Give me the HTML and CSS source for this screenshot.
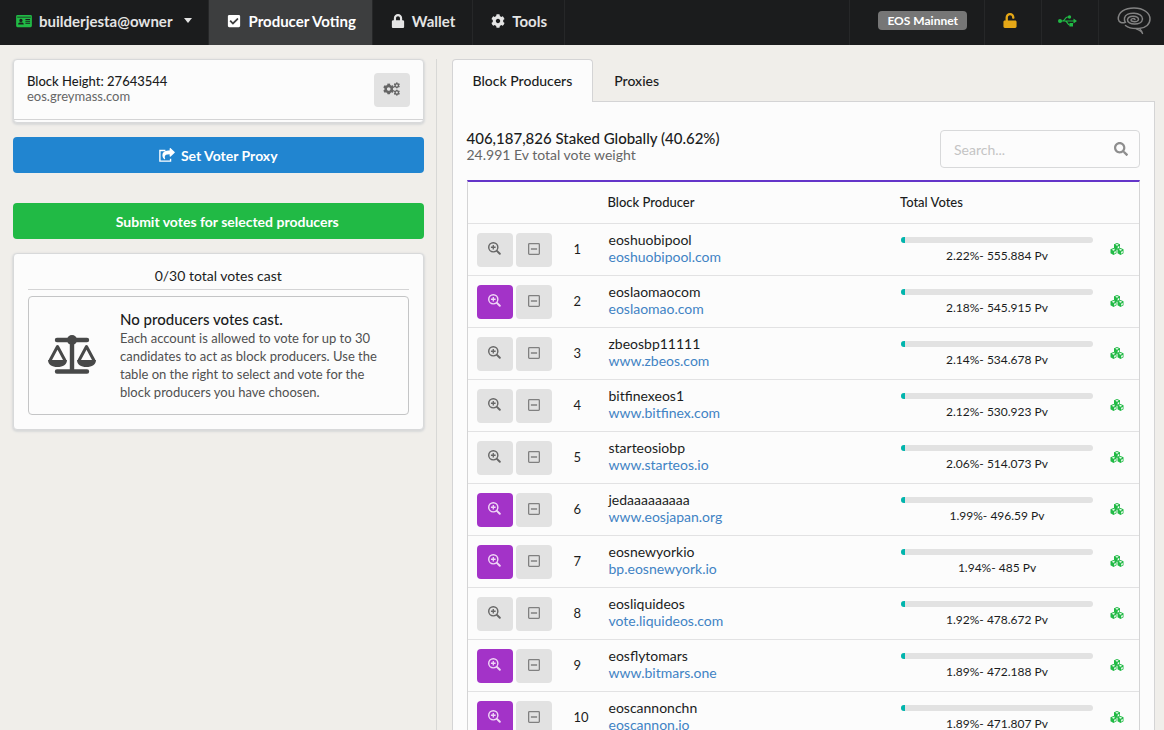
FILE: index.html
```html
<!DOCTYPE html>
<html lang="en">
<head>
    <meta charset="UTF-8">
    <meta name="viewport" content="width=device-width, initial-scale=1.0">
    <title>Producer Voting</title>
    <link rel="stylesheet" href="styles.css">
</head>
<body>
    <svg class="sprite" aria-hidden="true">
        <symbol id="id-card" viewBox="0 0 576 512">
            <path fill-rule="evenodd" d="M48 32h480a48 48 0 0 1 48 48v352a48 48 0 0 1-48 48H48a48 48 0 0 1-48-48V80a48 48 0 0 1 48-48zM40 100v24h496v-24zM176 176a60 60 0 1 0 0 120 60 60 0 0 0 0-120zM72 384h208c0-50-30-76-60-76h-88c-30 0-60 26-60 76zM340 180v40h170v-40zM340 250v36h170v-36zM340 320v36h170v-36z"/>
        </symbol>
        <symbol id="check-square" viewBox="0 0 448 512">
            <path d="M400 480H48c-26.51 0-48-21.49-48-48V80c0-26.51 21.49-48 48-48h352c26.51 0 48 21.49 48 48v352c0 26.51-21.49 48-48 48zm-204.686-98.059l184-184c6.248-6.248 6.248-16.379 0-22.627l-22.627-22.627c-6.248-6.248-16.379-6.249-22.628 0L184 302.745l-70.059-70.059c-6.248-6.248-16.379-6.248-22.628 0l-22.627 22.627c-6.248 6.248-6.248 16.379 0 22.627l104 104c6.249 6.25 16.379 6.25 22.628.001z"/>
        </symbol>
        <symbol id="lock" viewBox="0 0 448 512">
            <path d="M400 224h-24v-72C376 68.2 307.8 0 224 0S72 68.2 72 152v72H48c-26.5 0-48 21.5-48 48v192c0 26.5 21.5 48 48 48h352c26.5 0 48-21.5 48-48V272c0-26.5-21.5-48-48-48zm-104 0H152v-72c0-39.7 32.3-72 72-72s72 32.3 72 72v72z"/>
        </symbol>
        <symbol id="unlock" viewBox="0 0 448 512">
            <path d="M400 256H152V152.9c0-39.6 31.7-72.5 71.3-72.9 40-.4 72.7 32.1 72.7 72v16c0 13.3 10.7 24 24 24h32c13.3 0 24-10.7 24-24v-16C376 68 307.5-.3 223.5 0 139.5.3 72 69.5 72 153.5V256H48c-26.5 0-48 21.5-48 48v160c0 26.5 21.5 48 48 48h352c26.5 0 48-21.5 48-48V304c0-26.5-21.5-48-48-48z"/>
        </symbol>
        <symbol id="cog" viewBox="0 0 512 512">
            <path d="M444.788 291.1l42.616 24.599c4.867 2.809 7.126 8.618 5.459 13.985-11.07 35.642-29.97 67.842-54.689 94.586a12.016 12.016 0 0 1-14.832 2.254l-42.584-24.595a191.577 191.577 0 0 1-60.759 35.13v49.182a12.01 12.01 0 0 1-9.377 11.718c-34.956 7.85-72.499 8.256-109.219.007-5.49-1.233-9.403-6.096-9.403-11.723v-49.184a191.555 191.555 0 0 1-60.759-35.13l-42.584 24.595a12.016 12.016 0 0 1-14.832-2.254c-24.718-26.744-43.619-58.944-54.689-94.586-1.667-5.366.592-11.175 5.459-13.985L67.212 291.1a193.48 193.48 0 0 1 0-70.199l-42.616-24.599c-4.867-2.809-7.126-8.618-5.459-13.985 11.07-35.642 29.97-67.842 54.689-94.586a12.016 12.016 0 0 1 14.832-2.254l42.584 24.595a191.577 191.577 0 0 1 60.759-35.13V25.759a12.01 12.01 0 0 1 9.377-11.718c34.956-7.85 72.499-8.256 109.219-.007 5.49 1.233 9.403 6.096 9.403 11.723v49.184a191.555 191.555 0 0 1 60.759 35.13l42.584-24.595a12.016 12.016 0 0 1 14.832 2.254c24.718 26.744 43.619 58.944 54.689 94.586 1.667 5.366-.592 11.175-5.459 13.985L444.788 220.9a193.485 193.485 0 0 1 0 70.2zM336 256c0-44.112-35.888-80-80-80s-80 35.888-80 80 35.888 80 80 80 80-35.888 80-80z"/>
        </symbol>
        <symbol id="cogs" viewBox="0 0 640 512">
            <use href="#cog" x="0" y="40" width="430" height="430"/>
            <use href="#cog" x="400" y="0" width="240" height="240"/>
            <use href="#cog" x="400" y="272" width="240" height="240"/>
        </symbol>
        <symbol id="share" viewBox="0 0 576 512">
            <path d="M568 177L424 313c-15 14-40 4-40-17v-72c-145 1-206 35-165 171 5 14-13 26-25 17-39-28-74-82-74-137 0-143 118-179 264-180V24c0-21 25-31 40-17l144 136c10 9 10 25 0 34z"/>
            <path fill="none" stroke="currentColor" stroke-width="50" d="M230 90H28v392h390v-90"/>
        </symbol>
        <symbol id="search" viewBox="0 0 512 512">
            <path d="M505 442.7L405.3 343c-4.5-4.5-10.6-7-17-7H372c27.6-35.3 44-79.7 44-128C416 93.1 322.9 0 208 0S0 93.1 0 208s93.1 208 208 208c48.3 0 92.7-16.4 128-44v16.3c0 6.4 2.5 12.5 7 17l99.7 99.7c9.4 9.4 24.6 9.4 33.9 0l28.3-28.3c9.4-9.4 9.4-24.6.1-34zM208 336c-70.7 0-128-57.2-128-128 0-70.7 57.2-128 128-128 70.7 0 128 57.2 128 128 0 70.7-57.2 128-128 128z"/>
        </symbol>
        <symbol id="search-plus" viewBox="0 0 512 512">
            <path fill="none" stroke="currentColor" stroke-width="76" stroke-linecap="round" d="M350 350l115 115"/>
            <circle cx="208" cy="208" r="180" fill="none" stroke="currentColor" stroke-width="56"/>
            <path d="M182 116h52v66h66v52h-66v66h-52v-66h-66v-52h66z"/>
        </symbol>
        <symbol id="minus-square" viewBox="0 0 448 448">
            <rect x="24" y="24" width="400" height="400" rx="30" fill="none" stroke="currentColor" stroke-width="48"/>
            <path d="M108 196h232v56H108z"/>
        </symbol>
        <symbol id="scale" viewBox="0 0 48 40">
            <circle cx="24" cy="5" r="5"/>
            <path fill="none" stroke="currentColor" stroke-width="4.4" stroke-linecap="round" d="M9 5h30M9 36.500h30M24 5v31"/>
            <path fill="none" stroke="currentColor" stroke-width="3" stroke-linejoin="round" d="M2 25.500L9.500 11.500 17 25.500M31 25.500L38.500 11.500 46 25.500"/>
            <path d="M0 25h19c0 4.500-4 7-9.500 7S0 29.500 0 25zM29 25h19c0 4.500-4 7-9.500 7S29 29.500 29 25z"/>
        </symbol>
        <symbol id="cube" viewBox="0 0 14 14">
            <path fill-rule="evenodd" d="M7 0l6 2.600v7.800L7 14l-6-3.600V2.600zM7 2L3.500 3.700 7 5.300l3.500-1.600zM8.300 7.300v4L11.500 9.400V5.800z"/>
        </symbol>
        <symbol id="cubes" viewBox="0 0 28 24">
            <use href="#cube" x="7" y="0" width="14" height="14"/>
            <use href="#cube" x="0" y="10" width="14" height="14"/>
            <use href="#cube" x="14" y="10" width="14" height="14"/>
        </symbol>
        <symbol id="usb" viewBox="0 0 38 24">
            <circle cx="4" cy="12" r="4"/>
            <path fill="none" stroke="currentColor" stroke-width="2.400" d="M4 12h29M9 12c5 0 5-8 10-8h3M14 12c5 0 5 8 9 8h3"/>
            <circle cx="23" cy="4" r="3.400"/>
            <path d="M23 16h7v7h-7zM31 7l7 5-7 5z"/>
        </symbol>
        <symbol id="greymass" viewBox="0 0 34 28">
            <path fill="none" stroke="currentColor" stroke-width="1.500" stroke-linecap="round" d="M18 12.500c-1-1.500-4-1-4 .5 0 2.200 7 2.500 7.500-.5.300-4-10-5-11 .2-.7 5.300 14.500 6.500 15-.7C26 5 9 4 7.500 11c-.3 1.800 0 3 .8 4.200-2.800 1.300-6.500.300-7-3C1 5 8 1 17 1c9.500 0 16 5 16 11 0 5-4 9-11 9.500-5 .4-11-1-13.500-3"/>
            <path fill="none" stroke="currentColor" stroke-width="1.200" d="M19 21.500c2 2 5 1 6.800 5.500M22.500 21.500c1.500 1.500 3 2.500 3.300 5.500"/>
        </symbol>
    </svg>

    <nav class="menu">
        <button class="item account" type="button">
            <svg class="icon wide green"><use href="#id-card"/></svg>
            builderjesta@owner
            <span class="caret"></span>
        </button>
        <a class="item active" href="#voting"><svg class="icon"><use href="#check-square"/></svg>Producer Voting</a>
        <a class="item" href="#wallet"><svg class="icon"><use href="#lock"/></svg>Wallet</a>
        <a class="item" href="#tools"><svg class="icon"><use href="#cog"/></svg>Tools</a>
        <div class="right">
            <div class="item network"><span class="label">EOS Mainnet</span></div>
            <a class="item status" href="#lock-wallet" aria-label="Lock wallet"><svg class="icon yellow"><use href="#unlock"/></svg></a>
            <a class="item status" href="#connection" aria-label="Connection"><svg class="icon usb green"><use href="#usb"/></svg></a>
            <a class="item logo" href="#about" aria-label="Greymass"><svg><use href="#greymass"/></svg></a>
        </div>
    </nav>

    <div class="grid">
        <aside class="sidebar">
            <section class="card block-info">
                <div>
                    <h2>Block Height: 27643544</h2>
                    <p>eos.greymass.com</p>
                </div>
                <button class="button small" type="button" aria-label="Settings"><svg class="icon cogs"><use href="#cogs"/></svg></button>
            </section>
            <button class="button fluid blue" type="button"><svg class="icon wide"><use href="#share"/></svg>Set Voter Proxy</button>
            <button class="button fluid submit" type="button">Submit votes for selected producers</button>
            <section class="card votes">
                <h2>0/30 total votes cast</h2>
                <div class="message">
                    <svg class="scale"><use href="#scale"/></svg>
                    <div>
                        <h3>No producers votes cast.</h3>
                        <p>Each account is allowed to vote for up to 30 candidates to act as block producers. Use the table on the right to select and vote for the block producers you have choosen.</p>
                    </div>
                </div>
            </section>
        </aside>

        <main class="content">
            <div class="tabs">
                <a class="tab active" href="#producers">Block Producers</a>
                <a class="tab" href="#proxies">Proxies</a>
            </div>
            <div class="panel">
                <div class="panel-head">
                    <div>
                        <h1>406,187,826 Staked Globally (40.62%)</h1>
                        <p>24.991 Ev total vote weight</p>
                    </div>
                    <div class="search">
                        <input type="text" placeholder="Search..." aria-label="Search">
                        <svg class="icon"><use href="#search"/></svg>
                    </div>
                </div>
                <table>
                    <colgroup>
                        <col class="col-actions">
                        <col class="col-rank">
                        <col>
                        <col class="col-votes">
                        <col class="col-status">
                    </colgroup>
                    <thead>
                        <tr>
                            <th></th>
                            <th></th>
                            <th>Block Producer</th>
                            <th>Total Votes</th>
                            <th></th>
                        </tr>
                    </thead>
                    <tbody id="producers"></tbody>
                </table>
            </div>
        </main>
    </div>

    <script>
        // info: producer has published extra details
        const producers = [
            { name: 'eoshuobipool', url: 'eoshuobipool.com', percent: '2.22', votes: '555.884', info: false },
            { name: 'eoslaomaocom', url: 'eoslaomao.com', percent: '2.18', votes: '545.915', info: true },
            { name: 'zbeosbp11111', url: 'www.zbeos.com', percent: '2.14', votes: '534.678', info: false },
            { name: 'bitfinexeos1', url: 'www.bitfinex.com', percent: '2.12', votes: '530.923', info: false },
            { name: 'starteosiobp', url: 'www.starteos.io', percent: '2.06', votes: '514.073', info: false },
            { name: 'jedaaaaaaaaa', url: 'www.eosjapan.org', percent: '1.99', votes: '496.59', info: true },
            { name: 'eosnewyorkio', url: 'bp.eosnewyork.io', percent: '1.94', votes: '485', info: true },
            { name: 'eosliquideos', url: 'vote.liquideos.com', percent: '1.92', votes: '478.672', info: false },
            { name: 'eosflytomars', url: 'www.bitmars.one', percent: '1.89', votes: '472.188', info: true },
            { name: 'eoscannonchn', url: 'eoscannon.io', percent: '1.89', votes: '471.807', info: true }
        ];

        const list = document.getElementById('producers');

        producers.forEach((producer, index) => {
            const tr = document.createElement('tr');
            tr.innerHTML = `
                <td>
                    <div class="actions">
                        <button class="button small ${producer.info ? 'purple' : ''}" type="button" aria-label="Details"><svg class="icon"><use href="#search-plus"/></svg></button>
                        <button class="button small vote" type="button" aria-label="Vote"><svg class="icon"><use href="#minus-square"/></svg></button>
                    </div>
                </td>
                <td class="rank">${index + 1}</td>
                <td class="producer">${producer.name}<br><a href="https://${producer.url}">${producer.url}</a></td>
                <td class="total">
                    <div class="progress"><div class="bar" style="width: ${producer.percent}%"></div></div>
                    <span>${producer.percent}%- ${producer.votes} Pv</span>
                </td>
                <td class="state"><svg class="icon cubes green"><use href="#cubes"/></svg></td>
            `;
            list.appendChild(tr);
        });
    </script>
</body>
</html>
```
FILE: styles.css
```css
* {
    box-sizing: border-box;
}
body {
    margin: 0;
    background-color: #f0eeea;
    color: #1b1c1d;
    font-family: Lato, "Liberation Sans", sans-serif;
    font-size: 14px;
    line-height: 18px;
}
h1, h2, h3, p {
    margin: 0;
    font-weight: 500;
}
p {
    font-weight: 400;
}
a {
    color: #4183c4;
    text-decoration: none;
}
button, input {
    font-family: inherit;
}
.sprite {
    position: absolute;
    width: 0;
    height: 0;
}
.icon {
    width: 14px;
    height: 14px;
    fill: currentColor;
    flex: none;
}
.icon.wide {
    width: 16px;
}
.green {
    color: #21ba45;
}
.yellow {
    color: #e6a817;
}

/* top menu */
.menu {
    display: flex;
    height: 45px;
    background: #1b1c1d;
}
.menu .item {
    display: flex;
    align-items: center;
    gap: 7px;
    padding: 0 17px 4px 18px;
    border: none;
    border-right: 1px solid #262728;
    background: none;
    color: #e4e4e4;
    font-size: 15px;
    font-weight: 700;
}
.menu .account {
    padding-left: 16px;
    padding-right: 16px;
}
.menu .item.active {
    padding-right: 16px;
    background: #3d3e3f;
    color: #fff;
}
.caret {
    margin-left: 5px;
    border: 4px solid transparent;
    border-top: 5px solid currentColor;
    border-bottom: none;
}
.menu .right {
    display: flex;
    margin-left: auto;
    border-left: 1px solid #262728;
}
.menu .network {
    padding-left: 28px;
    padding-right: 17px;
}
.label {
    padding: 0 9px;
    border-radius: 4px;
    background: #767676;
    color: #fff;
    font-size: 12px;
    line-height: 19px;
}
.menu .status {
    width: 57px;
    padding-left: 0;
    padding-right: 6px;
    justify-content: center;
}
.menu .status .icon {
    width: 16px;
    height: 15px;
}
.menu .status .usb {
    width: 19px;
    height: 12px;
}
.menu .logo {
    width: 65px;
    padding: 0 0 4px 4px;
    border: none;
    color: #828282;
    justify-content: center;
}
.logo svg {
    width: 34px;
    height: 28px;
}

/* page columns */
.grid {
    display: grid;
    grid-template-columns: 3fr 5fr;
    padding-top: 14px;
}
.sidebar {
    padding: 0 12px 0 13px;
    border-right: 1px solid #d8d8d6;
}
.content {
    padding: 0 9px 14px 15px;
    min-width: 0;
}
.card {
    border: 1px solid #d8d9da;
    border-radius: 4px;
    background: #fcfcfc;
    box-shadow: 0 1px 2px 1px #d8d9da;
}
.block-info {
    position: relative;
    display: flex;
    justify-content: space-between;
    align-items: center;
    padding: 13px 13px 15px;
}
.block-info::after {
    content: "";
    position: absolute;
    left: 0;
    right: 0;
    bottom: 2px;
    border-bottom: 1px solid #d4d4d5;
}
.block-info div {
    margin-bottom: 2px;
}
.block-info h2 {
    font-size: 13px;
    line-height: 15px;
}
.block-info p {
    color: #666;
    font-size: 13px;
    line-height: 15px;
}

.button {
    display: flex;
    justify-content: center;
    align-items: center;
    gap: 6px;
    height: 36px;
    padding: 0;
    border: none;
    border-radius: 4px;
    background: #e2e2e2;
    color: #666;
    cursor: pointer;
}
.button.small {
    width: 36px;
    height: 34px;
}
.button.small .icon {
    width: 13px;
    height: 13px;
    margin-bottom: 2px;
}
.button.small .icon.cogs {
    width: 17px;
    height: 14px;
}
.button.vote {
    color: #808080;
}
.button.vote .icon {
    width: 12px;
    height: 12px;
}
.button.purple {
    background: #a333c8;
    color: #f0d8f6;
}
.button.fluid {
    width: 100%;
    color: #fff;
    font-size: 14px;
    font-weight: 700;
}
.button.blue {
    margin-top: 14px;
    background: #2185d0;
}
.button.submit {
    margin: 30px 0 14px;
    padding-left: 18px;
    background: #21ba45;
}
.votes {
    padding: 13px 14px 14px;
}
.votes h2 {
    margin-bottom: 6px;
    padding-bottom: 4px;
    border-bottom: 1px solid #d4d4d5;
    font-size: 14px;
    font-weight: 400;
    text-align: center;
}
.message {
    display: flex;
    align-items: center;
    gap: 24px;
    padding: 12px 19px 13px;
    border: 1px solid #c4c5c6;
    border-radius: 4px;
}
.message h3 {
    font-size: 15px;
    line-height: 20px;
}
.message p {
    color: #505050;
    font-size: 13px;
}
.scale {
    width: 48px;
    height: 40px;
    flex: none;
    fill: #484949;
    color: #484949;
}

/* tabs */
.tabs {
    display: flex;
}
.tab {
    padding: 12px 20px 11px;
    border: 1px solid transparent;
    border-bottom: none;
    color: #1b1c1d;
    font-weight: 500;
}
.tab.active {
    position: relative;
    margin-bottom: -1px;
    padding-bottom: 12px;
    border-color: #d4d4d5;
    border-radius: 4px 4px 0 0;
    background: #fcfcfc;
}
.panel {
    padding: 28px 14px 14px;
    border: 1px solid #d4d4d5;
    background: #fcfcfc;
}
.panel-head {
    display: flex;
    justify-content: space-between;
    margin-bottom: 12px;
}
.panel-head h1 {
    font-size: 15px;
    line-height: 16px;
}
.panel-head p {
    color: #666;
    font-size: 14px;
}
.search {
    position: relative;
    width: 200px;
}
.search input {
    width: 100%;
    height: 38px;
    padding: 0 40px 0 13px;
    border: 1px solid #d8d9da;
    border-radius: 4px;
    background: #fcfcfc;
    font-size: 14px;
}
.search input::placeholder {
    color: #c4c4c4;
}
.search .icon {
    position: absolute;
    top: 12px;
    right: 12px;
    color: #8e8e8e;
}

/* producers */
table {
    width: 100%;
    border: 1px solid #d4d4d5;
    border-top: 2px solid #6435c9;
    border-spacing: 0;
    table-layout: fixed;
}
.col-actions {
    width: 97px;
}
.col-rank {
    width: 34px;
}
.col-votes {
    width: 202px;
}
.col-status {
    width: 46px;
}
th {
    height: 42px;
    padding: 0 9px 2px;
    border-bottom: 1px solid #e2e2e3;
    font-size: 13px;
    font-weight: 500;
    text-align: left;
}
td {
    height: 52px;
    padding: 0 9px;
    border-bottom: 1px solid #e2e2e3;
    font-size: 13px;
}
.rank {
    padding-bottom: 2px;
}
.state {
    padding: 0 0 2px 17px;
}
.actions {
    display: flex;
    gap: 3px;
}
.producer {
    padding: 0 9px 4px 10px;
    font-size: 14px;
    line-height: 17px;
}
.total {
    padding: 2px 0 0 10px;
    text-align: center;
}
.progress {
    height: 6px;
    margin-bottom: 5px;
    border-radius: 3px;
    background: #e2e2e2;
    overflow: hidden;
}
.bar {
    height: 6px;
    background: #00b5ad;
}
.total span {
    display: block;
    font-size: 12px;
    line-height: 16px;
}
.icon.cubes {
    display: block;
    height: 12px;
}
```
